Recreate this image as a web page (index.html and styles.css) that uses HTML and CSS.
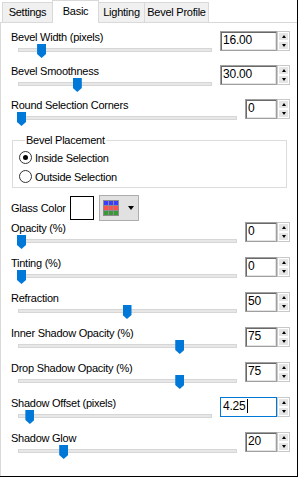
FILE: index.html
```html
<!DOCTYPE html>
<html lang="en">
<head>
    <meta charset="UTF-8">
    <title>Glass Bevel - Basic</title>
    <link rel="stylesheet" href="styles.css">
</head>
<body>
    <div class="dialog">
        <div class="tabs">
            <div class="tab">Settings</div>
            <div class="tab active">Basic</div>
            <div class="tab">Lighting</div>
            <div class="tab">Bevel Profile</div>
        </div>

        <div class="panel">
            <div class="row tight">
                <div class="main">
                    <div class="label">Bevel Width (pixels)</div>
                    <div class="slider" style="--v:0.108"><div class="track"></div><div class="thumb"></div></div>
                </div>
                <div class="spin wide"><div class="field">16.00</div><div class="arrows"><span class="up"></span><span class="down"></span></div></div>
            </div>

            <div class="row tight">
                <div class="main">
                    <div class="label">Bevel Smoothness</div>
                    <div class="slider" style="--v:0.3"><div class="track"></div><div class="thumb"></div></div>
                </div>
                <div class="spin wide"><div class="field">30.00</div><div class="arrows"><span class="up"></span><span class="down"></span></div></div>
            </div>

            <div class="row tight">
                <div class="main">
                    <div class="label">Round Selection Corners</div>
                    <div class="slider" style="--v:0"><div class="track"></div><div class="thumb"></div></div>
                </div>
                <div class="spin"><div class="field">0</div><div class="arrows"><span class="up"></span><span class="down"></span></div></div>
            </div>

            <fieldset class="group">
                <legend>Bevel Placement</legend>
                <label class="radio"><span class="dot checked"></span>Inside Selection</label>
                <label class="radio"><span class="dot"></span>Outside Selection</label>
            </fieldset>

            <div class="color-row">
                <span class="label">Glass Color</span>
                <span class="swatch"></span>
                <span class="color-btn">
                    <span class="grid">
                        <i class="b"></i><i class="b"></i><i class="b"></i>
                        <i class="r"></i><i class="r"></i><i class="r"></i>
                        <i class="g"></i><i class="g"></i><i class="g"></i>
                    </span>
                    <span class="caret-down"></span>
                </span>
            </div>

            <div class="row">
                <div class="main">
                    <div class="label">Opacity (%)</div>
                    <div class="slider" style="--v:0"><div class="track"></div><div class="thumb"></div></div>
                </div>
                <div class="spin"><div class="field">0</div><div class="arrows"><span class="up"></span><span class="down"></span></div></div>
            </div>

            <div class="row">
                <div class="main">
                    <div class="label">Tinting (%)</div>
                    <div class="slider" style="--v:0"><div class="track"></div><div class="thumb"></div></div>
                </div>
                <div class="spin"><div class="field">0</div><div class="arrows"><span class="up"></span><span class="down"></span></div></div>
            </div>

            <div class="row">
                <div class="main">
                    <div class="label">Refraction</div>
                    <div class="slider" style="--v:0.5"><div class="track"></div><div class="thumb"></div></div>
                </div>
                <div class="spin"><div class="field">50</div><div class="arrows"><span class="up"></span><span class="down"></span></div></div>
            </div>

            <div class="row">
                <div class="main">
                    <div class="label">Inner Shadow Opacity (%)</div>
                    <div class="slider" style="--v:0.75"><div class="track"></div><div class="thumb"></div></div>
                </div>
                <div class="spin"><div class="field">75</div><div class="arrows"><span class="up"></span><span class="down"></span></div></div>
            </div>

            <div class="row">
                <div class="main">
                    <div class="label">Drop Shadow Opacity (%)</div>
                    <div class="slider" style="--v:0.75"><div class="track"></div><div class="thumb"></div></div>
                </div>
                <div class="spin"><div class="field">75</div><div class="arrows"><span class="up"></span><span class="down"></span></div></div>
            </div>

            <div class="row">
                <div class="main">
                    <div class="label">Shadow Offset (pixels)</div>
                    <div class="slider" style="--v:0.045"><div class="track"></div><div class="thumb"></div></div>
                </div>
                <div class="spin wide"><div class="field focus">4.25<span class="cursor"></span></div><div class="arrows"><span class="up"></span><span class="down"></span></div></div>
            </div>

            <div class="row">
                <div class="main">
                    <div class="label">Shadow Glow</div>
                    <div class="slider" style="--v:0.2"><div class="track"></div><div class="thumb"></div></div>
                </div>
                <div class="spin"><div class="field">20</div><div class="arrows"><span class="up"></span><span class="down"></span></div></div>
            </div>
        </div>
    </div>
</body>
</html>
```

FILE: styles.css
```css
* {
    box-sizing: border-box;
    margin: 0;
    padding: 0;
}
body {
    background: #fff;
    font-family: "Liberation Sans", Arial, sans-serif;
    font-size: 11px;
    letter-spacing: -0.25px;
    color: #000;
}

.dialog {
    width: 298px;
    height: 477px;
    border-right: 1px solid #000;
    border-bottom: 1px solid #000;
    display: flex;
    flex-direction: column;
}

/* tab strip */
.tabs {
    display: flex;
    align-items: flex-end;
    height: 22px;
    padding-left: 2px;
    position: relative;
    z-index: 1;
}
.tab {
    height: 20px;
    line-height: 18px;
    background: #f0f0f0;
    border: 1px solid #d9d9d9;
    border-bottom: none;
    margin-left: -1px;
    text-align: center;
    white-space: nowrap;
}
.tab:nth-child(1) {
    margin-left: 0;
    width: 51px;
}
.tab:nth-child(2) { width: 47px; }
.tab:nth-child(3) { width: 47px; }
.tab:nth-child(4) { width: 65px; }
.tab.active {
    height: 23px;
    line-height: 21px;
    margin-bottom: -1px;
    background: #fff;
}

.panel {
    flex: 1;
    border-top: 1px solid #d9d9d9;
    border-left: 1px solid #d9d9d9;
    padding-top: 7px;
}

/* slider rows */
.row {
    display: flex;
    align-items: flex-start;
    height: 35px;
    padding-right: 7px;
}
.row.tight {
    height: 34px;
}
.main {
    flex: 1;
    margin-right: 8px;
}
.label {
    line-height: 14px;
    padding-left: 10px;
    white-space: nowrap;
}
.slider {
    position: relative;
    height: 14px;
    margin-left: 17px;
}
.slider .track {
    position: absolute;
    left: 0;
    right: 0;
    top: 4px;
    height: 4px;
    background: #e7e7e7;
    border: 1px solid #d6d6d6;
}
.slider .thumb {
    position: absolute;
    top: 0;
    left: calc((100% - 8px) * var(--v) - 1px);
    width: 9px;
    height: 14px;
    background: #0078d7;
    clip-path: polygon(0 0, 100% 0, 100% 10px, 50% 100%, 0 10px);
}

/* spin boxes */
.spin {
    display: flex;
    margin-top: 1px;
}
.spin .field {
    width: 32px;
    height: 20px;
    line-height: 17px;
    padding-left: 2px;
    font-size: 12px;
    letter-spacing: -0.2px;
    border: 1px solid #a0a0a0;
    box-shadow: inset 1px 1px 0 #696969, inset -1px -1px 0 #e3e3e3;
    background: #fff;
}
.spin.wide .field {
    width: 57px;
}
.spin .field.focus {
    border-color: #0078d7;
    box-shadow: none;
}
.cursor {
    display: inline-block;
    width: 1px;
    height: 14px;
    background: #000;
    vertical-align: -3px;
    margin-left: 1px;
}
.arrows {
    display: flex;
    flex-direction: column;
    width: 13px;
    height: 20px;
    border: 1px solid #c8c8c8;
    background: #fff;
}
.arrows span {
    flex: 1;
    position: relative;
    background: #e5e5e5;
    border: 1px solid #fff;
}
.arrows span::after {
    content: "";
    position: absolute;
    left: 3px;
    top: 2px;
    border-left: 2.5px solid transparent;
    border-right: 2.5px solid transparent;
}
.arrows .up::after {
    border-bottom: 3px solid #000;
}
.arrows .down::after {
    border-top: 3px solid #000;
}

/* bevel placement group */
.group {
    margin: 1px 10px 0 11px;
    border: 1px solid #dcdcdc;
    padding: 1px 0 1px 6px;
}
.group legend {
    line-height: 14px;
    padding: 0 1px;
    margin-left: 6px;
}
.radio {
    display: flex;
    align-items: center;
    height: 19px;
}
.dot {
    width: 13px;
    height: 13px;
    border: 1px solid #333;
    border-radius: 50%;
    margin-right: 3px;
    position: relative;
    background: #fff;
}
.dot.checked::after {
    content: "";
    position: absolute;
    left: 3px;
    top: 3px;
    width: 5px;
    height: 5px;
    border-radius: 50%;
    background: #000;
}

/* glass color */
.color-row {
    display: flex;
    align-items: center;
    height: 26px;
    margin-top: 7px;
}
.color-row .label {
    width: 69px;
}
.swatch {
    width: 24px;
    height: 24px;
    border: 1px solid #000;
    background: #fff;
}
.color-btn {
    display: flex;
    align-items: center;
    width: 40px;
    height: 26px;
    margin-left: 5px;
    background: #e1e1e1;
    border: 1px solid #adadad;
    padding-left: 3px;
}
.grid {
    display: grid;
    grid-template-columns: repeat(3, 4px);
    grid-template-rows: repeat(3, 4px);
    gap: 1px;
    padding: 1px;
    background: #8c8c8c;
}
.grid .b { background: #3c3cff; }
.grid .r { background: #ff5050; }
.grid .g { background: #3a9a3a; }
.caret-down {
    margin-left: 9px;
    border-left: 3.5px solid transparent;
    border-right: 3.5px solid transparent;
    border-top: 4px solid #000;
}
```
